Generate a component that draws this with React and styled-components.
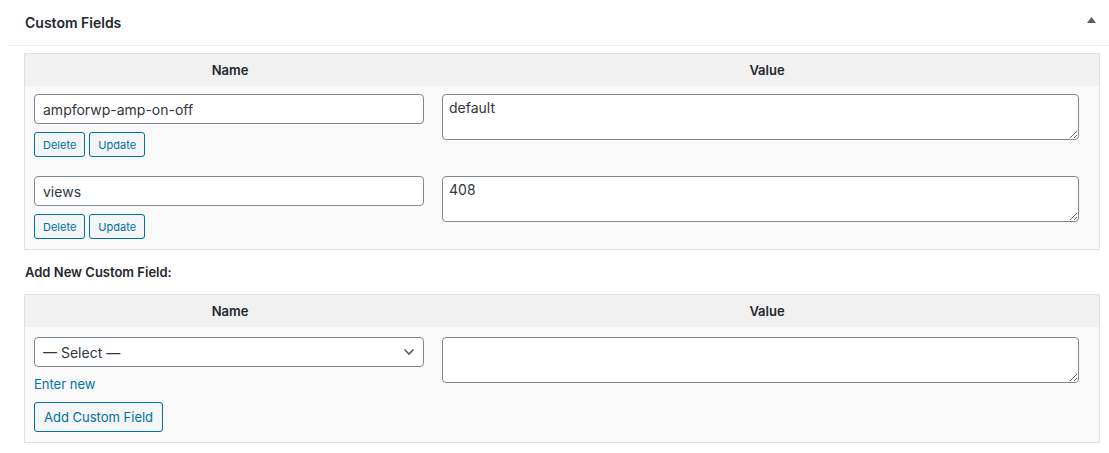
import React from "react";
import styled, { createGlobalStyle } from "styled-components";

const Global = createGlobalStyle`
  html, body { margin: 0; padding: 0; background: #fff; }
  body {
    font-family: Inter, "Noto Sans", "Liberation Sans", sans-serif;
    font-size: 13px;
    color: #23282d;
  }
  * { box-sizing: border-box; }
`;

const Postbox = styled.div`
  margin-left: 8px;
  width: 1101px;
  background: #fff;
`;

const PostboxHeader = styled.div`
  height: 46px;
  display: flex;
  align-items: center;
  justify-content: space-between;
  padding: 0 12px 1px 17px;
  border-bottom: 1px solid #eeeeee;
`;

const Title = styled.h2`
  margin: 0;
  font-size: 14px;
  font-weight: 600;
  color: #23282d;
`;

const Toggle = styled.button`
  border: 0;
  background: transparent;
  padding: 0;
  width: 12px;
  height: 12px;
  display: flex;
  align-items: center;
  justify-content: center;
  margin-top: -4px;
`;

const Inside = styled.div`
  padding: 7px 9px 0 16px;
`;

const Table = styled.div`
  border: 1px solid #e1e1e1;
  background: #f9f9f9;
`;

const HeadRow = styled.div`
  display: grid;
  grid-template-columns: 410px 1fr;
  height: 32px;
  background: #f1f1f1;
  align-items: center;
`;

const Th = styled.div`
  text-align: center;
  font-weight: 600;
  font-size: 13px;
  color: #23282d;
`;

const Row = styled.div`
  display: grid;
  grid-template-columns: 417px 1fr;
  padding: ${(p) => p.$pt || 8}px 0 ${(p) => p.$pb || 11}px;
`;

const NameCell = styled.div`
  padding-left: 9px;
  display: flex;
  flex-direction: column;
  align-items: flex-start;
`;

const ValueCell = styled.div`
  padding-left: 0;
`;

const TextInput = styled.input`
  width: 390px;
  height: 30px;
  border: 1px solid #7e8993;
  border-radius: 4px;
  background: #fff;
  padding: 0 8px;
  font-family: inherit;
  font-size: 14px;
  color: #32373c;
  outline: none;
`;

const TextArea = styled.textarea`
  display: block;
  width: 637px;
  height: 46px;
  border: 1px solid #7e8993;
  border-radius: 4px;
  background: #fff;
  padding: 4px 6px;
  font-family: inherit;
  font-size: 14px;
  line-height: 1.3;
  color: #32373c;
  outline: none;
  resize: vertical;
`;

const Actions = styled.div`
  display: flex;
  gap: 4px;
  margin-top: 8px;
`;

const Button = styled.button`
  height: ${(p) => (p.$small ? "25px" : "30px")};
  padding: ${(p) => (p.$small ? "0 8px" : "0 9px")};
  font-family: inherit;
  font-size: ${(p) => (p.$small ? "11px" : "13px")};
  color: #0071a1;
  background: #f3f5f6;
  border: 1px solid #0071a1;
  border-radius: 3px;
  cursor: pointer;
`;

const Label = styled.p`
  margin: 0;
  padding: 13px 0 13px 1px;
  line-height: 18px;
  font-weight: 600;
  font-size: 13px;
  color: #23282d;
`;

const SelectWrap = styled.div`
  position: relative;
  width: 390px;
`;

const Select = styled.select`
  width: 390px;
  height: 30px;
  appearance: none;
  -webkit-appearance: none;
  border: 1px solid #7e8993;
  border-radius: 4px;
  background: #fff;
  padding: 0 24px 0 8px;
  font-family: inherit;
  font-size: 14px;
  color: #32373c;
  outline: none;
`;

const Chevron = styled.svg`
  position: absolute;
  right: 9px;
  top: 11px;
  pointer-events: none;
`;

const EnterNew = styled.a`
  display: block;
  margin-top: 7px;
  line-height: 20px;
  font-size: 13px;
  color: #0073aa;
  text-decoration: none;
`;

const AddButtonWrap = styled.div`
  margin-top: 8px;
`;

const fields = [
  { name: "ampforwp-amp-on-off", value: "default" },
  { name: "views", value: "408" },
];

export default function App() {
  return (
    <>
      <Global />
      <Postbox>
        <PostboxHeader>
          <Title>Custom Fields</Title>
          <Toggle aria-label="Toggle panel">
            <svg width="9" height="6" viewBox="0 0 9 6">
              <path d="M4.5 0 L9 6 L0 6 Z" fill="#555d66" />
            </svg>
          </Toggle>
        </PostboxHeader>
        <Inside>
          <Table>
            <HeadRow>
              <Th>Name</Th>
              <Th>Value</Th>
            </HeadRow>
            {fields.map((f, i) => (
              <Row key={f.name} $pb={i === fields.length - 1 ? 10 : 11}>
                <NameCell>
                  <TextInput defaultValue={f.name} />
                  <Actions>
                    <Button $small>Delete</Button>
                    <Button $small>Update</Button>
                  </Actions>
                </NameCell>
                <ValueCell>
                  <TextArea defaultValue={f.value} />
                </ValueCell>
              </Row>
            ))}
          </Table>
          <Label>Add New Custom Field:</Label>
          <Table>
            <HeadRow>
              <Th>Name</Th>
              <Th>Value</Th>
            </HeadRow>
            <Row $pt={10} $pb={10}>
              <NameCell>
                <SelectWrap>
                  <Select defaultValue="">
                    <option value="">— Select —</option>
                  </Select>
                  <Chevron width="12" height="8" viewBox="0 0 12 8">
                    <path d="M1.5 1.5 L6 6 L10.5 1.5" fill="none" stroke="#555d66" strokeWidth="1.6" />
                  </Chevron>
                </SelectWrap>
                <EnterNew href="#">Enter new</EnterNew>
                <AddButtonWrap>
                  <Button>Add Custom Field</Button>
                </AddButtonWrap>
              </NameCell>
              <ValueCell>
                <TextArea defaultValue="" />
              </ValueCell>
            </Row>
          </Table>
        </Inside>
      </Postbox>
    </>
  );
}
